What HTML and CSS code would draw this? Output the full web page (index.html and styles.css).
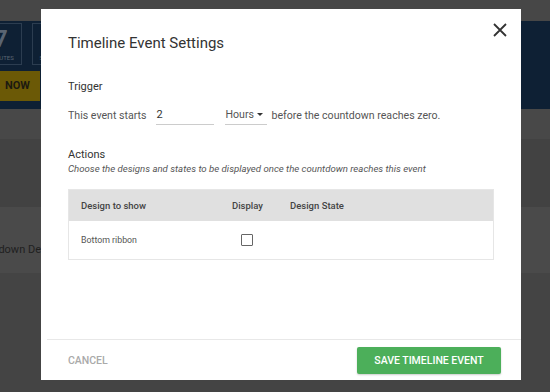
FILE: index.html
```html
<!DOCTYPE html>
<html lang="en">
<head>
    <meta charset="UTF-8">
    <title>Timeline Event Settings</title>
    <link rel="stylesheet" href="styles.css">
</head>
<body>
<div class="page">
    <div class="topbar"></div>
    <div class="banner">
        <div class="counters">
            <div class="counter"><span class="num">7</span><span class="unit">MINUTES</span></div>
            <div class="counter"><span class="num">5</span><span class="unit">SECONDS</span></div>
        </div>
        <div class="now-btn">NOW</div>
    </div>
    <div class="band band-a"></div>
    <div class="band band-b"></div>
    <div class="band band-c"><span class="band-text">Countdown De</span></div>
    <div class="band band-d"></div>
</div>

<div class="modal">
    <button type="button" class="close" aria-label="Close">
        <svg width="14" height="14" viewBox="0 0 14 14"><path d="M1 1L13 13M13 1L1 13" stroke="#333" stroke-width="1.8" fill="none"/></svg>
    </button>
    <h1 class="modal-title">Timeline Event Settings</h1>

    <div class="section">
        <p class="label">Trigger</p>
        <div class="trigger-row">
            <span>This event starts</span>
            <input type="text" class="num-input" value="2">
            <span class="select">Hours <span class="caret"></span></span>
            <span>before the countdown reaches zero.</span>
        </div>
    </div>

    <div class="section actions">
        <p class="label">Actions</p>
        <p class="hint">Choose the designs and states to be displayed once the countdown reaches this event</p>
        <table class="designs">
            <thead>
            <tr>
                <th class="col-name">Design to show</th>
                <th class="col-display">Display</th>
                <th>Design State</th>
            </tr>
            </thead>
            <tbody>
            <tr>
                <td class="col-name">Bottom ribbon</td>
                <td class="col-display"><span class="checkbox"></span></td>
                <td></td>
            </tr>
            </tbody>
        </table>
    </div>

    <div class="footer">
        <button type="button" class="btn-cancel">CANCEL</button>
        <button type="button" class="btn-save">SAVE TIMELINE EVENT</button>
    </div>
</div>
</body>
</html>
```

FILE: styles.css
```css
body {
    margin: 0;
    background-color: #464646;
    font-family: Roboto, "Liberation Sans", sans-serif;
    overflow: hidden;
}

.page {
    width: 550px;
    height: 392px;
}

.topbar {
    height: 21px;
    background-color: #474747;
}

.banner {
    height: 88px;
    background-color: #0e2034;
    padding-top: 2px;
    box-sizing: border-box;
}

.counters {
    display: flex;
    gap: 10px;
    margin-left: -20px;
}

.counter {
    width: 40px;
    height: 40px;
    border: 1px solid #2c3d50;
    display: flex;
    flex-direction: column;
    align-items: center;
    color: #5a6573;
}

.counter .num {
    font-size: 24px;
    font-weight: bold;
    line-height: 30px;
}

.counter .unit {
    font-size: 6px;
}

.now-btn {
    margin-top: 6px;
    width: 40px;
    height: 30px;
    background-color: #6b5906;
    color: #1c1a10;
    font-size: 11px;
    font-weight: bold;
    line-height: 30px;
    text-align: right;
    padding-right: 10px;
    box-sizing: border-box;
}

.band-a {
    height: 30px;
    background-color: #484848;
}

.band-b {
    height: 68px;
    background-color: #424242;
}

.band-c {
    height: 66px;
    background-color: #4a4a4a;
    position: relative;
}

.band-text {
    position: absolute;
    right: 509px;
    top: 36px;
    font-size: 11px;
    color: #1f1f1f;
    white-space: nowrap;
}

.band-d {
    height: 119px;
    background-color: #444444;
}

.modal {
    position: absolute;
    left: 41px;
    top: 9px;
    width: 480px;
    height: 371px;
    background-color: #ffffff;
    padding: 24px 27px 0;
    box-sizing: border-box;
    color: #333333;
}

.close {
    position: absolute;
    right: 14px;
    top: 14px;
    border: none;
    background: none;
    padding: 0;
    width: 14px;
    height: 14px;
}

.modal-title {
    margin: 0;
    font-size: 15px;
    font-weight: normal;
    line-height: 20px;
    color: #333333;
}

.section {
    margin-top: 27px;
}

.label {
    margin: 0;
    font-size: 11px;
    line-height: 14px;
    color: #333333;
}

.trigger-row {
    display: flex;
    align-items: center;
    margin-top: 12px;
    font-size: 10.6px;
    color: #555555;
}

.num-input {
    width: 58px;
    margin-left: 10px;
    border: none;
    border-bottom: 1px solid #cccccc;
    padding: 2px 0 3px;
    font-family: inherit;
    font-size: 11px;
    color: #333333;
    outline: none;
}

.select {
    width: 42px;
    margin-left: 11px;
    margin-right: 4px;
    border-bottom: 1px solid #cccccc;
    padding: 2px 0 3px;
    display: flex;
    align-items: center;
    gap: 3px;
}

.caret {
    width: 0;
    height: 0;
    border-left: 3px solid transparent;
    border-right: 3px solid transparent;
    border-top: 3px solid #333333;
}

.actions {
    margin-top: 23px;
}

.hint {
    margin: 1px 0 0;
    font-size: 9.65px;
    font-style: italic;
    color: #555555;
}

.designs {
    width: 100%;
    table-layout: fixed;
    border-collapse: collapse;
    margin-top: 15px;
    font-size: 9.5px;
    border: 1px solid #e6e6e6;
}

.designs th {
    background-color: #e0e0e0;
    height: 31px;
    text-align: left;
    font-weight: 500;
    color: #444444;
    padding: 0;
}

.designs td {
    height: 38px;
    padding: 0;
    font-size: 8.8px;
    color: #555555;
}

.col-name {
    width: 151px;
    padding-left: 12px !important;
}

.col-display {
    width: 58px;
}

td.col-display {
    padding-left: 9px !important;
    width: 49px;
}

.checkbox {
    display: block;
    width: 10px;
    height: 10px;
    border: 1px solid #666666;
    border-radius: 1px;
}

.footer {
    position: absolute;
    left: 6px;
    right: 0;
    bottom: 0;
    height: 40px;
    border-top: 1px solid #e8e8e8;
    display: flex;
    justify-content: space-between;
    align-items: center;
    padding: 0 20px 0 21px;
}

.btn-cancel {
    border: none;
    background: none;
    padding: 0;
    font-family: inherit;
    font-size: 10.5px;
    font-weight: 500;
    color: #aaaaaa;
}

.btn-save {
    width: 144px;
    height: 27px;
    border: none;
    border-radius: 2px;
    background-color: #4caf5a;
    color: #ffffff;
    font-family: inherit;
    font-size: 10.5px;
    font-weight: 500;
    box-shadow: 0 1px 2px rgba(0, 0, 0, 0.2);
}
```
